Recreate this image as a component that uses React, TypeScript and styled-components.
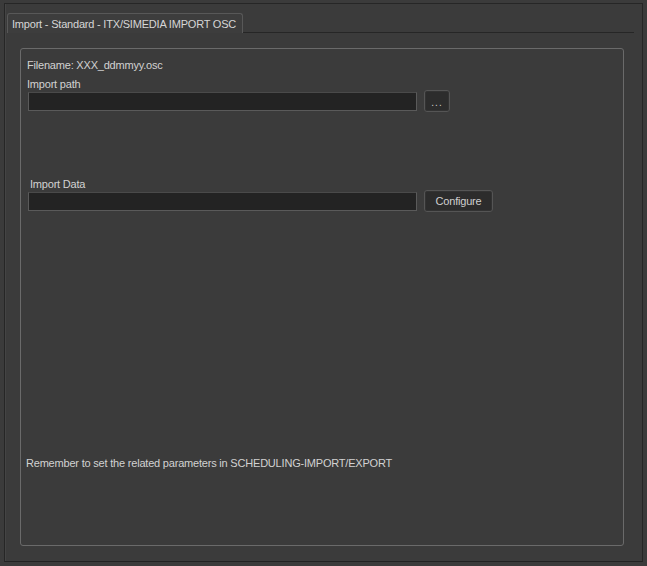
import React from "react";
import styled, { createGlobalStyle } from "styled-components";

const GlobalStyle = createGlobalStyle`
  html, body {
    margin: 0;
    padding: 0;
    background: #3b3b3b;
  }
  body {
    font-family: "Liberation Sans", Arial, sans-serif;
    font-size: 11px;
    letter-spacing: -0.2px;
    color: #d2d2d2;
  }
`;

const Page = styled.div`
  width: 647px;
  height: 566px;
  padding: 3px 0 0 4px;
  box-sizing: border-box;
`;

const Frame = styled.div`
  width: 639px;
  height: 559px;
  box-sizing: border-box;
  border: 1px solid #262626;
  border-bottom-color: #222;
  box-shadow: inset 1px 0 0 #444;
  display: flex;
  flex-direction: column;
`;

const TabStrip = styled.div`
  display: flex;
  align-items: flex-end;
  height: 29px;
  padding-left: 2px;
  padding-right: 8px;
`;

const Tab = styled.div`
  height: 20px;
  width: 236px;
  box-sizing: border-box;
  border: 1px solid #585858;
  border-bottom: none;
  border-radius: 3px 3px 0 0;
  padding: 3px 0 0 4px;
  line-height: 14px;
  white-space: nowrap;
  color: #d6d6d6;
  background: #3d3d3d;
`;

const TabLine = styled.div`
  flex: 1;
  height: 1px;
  background: #262626;
`;

const Pane = styled.div`
  flex: 1;
  padding: 15px 18px 15px 15px;
  display: flex;
`;

const GroupBox = styled.div`
  flex: 1;
  border: 1px solid #6a6a6a;
  border-radius: 3px;
  padding: 9px 0 0 6px;
  display: flex;
  flex-direction: column;
`;

const Label = styled.div<{ $indent?: number; $top?: number }>`
  line-height: 14px;
  height: 14px;
  margin-left: ${(p) => p.$indent ?? 0}px;
  margin-top: ${(p) => p.$top ?? 0}px;
  white-space: nowrap;
`;

const FieldRow = styled.div<{ $top?: number }>`
  display: flex;
  align-items: center;
  gap: 7px;
  margin-top: ${(p) => p.$top ?? 0}px;
  margin-left: 1px;
`;

const Field = styled.div`
  width: 389px;
  height: 19px;
  box-sizing: border-box;
  background: #232323;
  border: 1px solid #5a5a5a;
  border-top-color: #4a4a4a;
`;

const Button = styled.div<{ $w: number }>`
  width: ${(p) => p.$w}px;
  height: 22px;
  box-sizing: border-box;
  border: 1px solid #555;
  border-radius: 3px;
  background: #2c2c2c;
  box-shadow: inset 0 0 0 1px #333;
  display: flex;
  align-items: center;
  justify-content: center;
  color: #cfcfcf;
  line-height: 14px;
`;

const Dots = styled.span`
  font-size: 10px;
  letter-spacing: 1px;
  margin-top: 4px;
`;

const Note = styled.div`
  margin-top: auto;
  margin-bottom: 75px;
  margin-left: -1px;
  line-height: 14px;
  white-space: nowrap;
`;

export default function App() {
  return (
    <>
      <GlobalStyle />
      <Page>
        <Frame>
          <TabStrip>
            <Tab>Import - Standard - ITX/SIMEDIA IMPORT OSC</Tab>
            <TabLine />
          </TabStrip>
          <Pane>
            <GroupBox>
              <Label>Filename: XXX_ddmmyy.osc</Label>
              <Label $top={5}>Import path</Label>
              <FieldRow $top={-1}>
                <Field />
                <Button $w={26}>
                  <Dots>...</Dots>
                </Button>
              </FieldRow>
              <Label $indent={3} $top={65}>
                Import Data
              </Label>
              <FieldRow $top={-1}>
                <Field />
                <Button $w={69}>Configure</Button>
              </FieldRow>
              <Note>Remember to set the related parameters in SCHEDULING-IMPORT/EXPORT</Note>
            </GroupBox>
          </Pane>
        </Frame>
      </Page>
    </>
  );
}
